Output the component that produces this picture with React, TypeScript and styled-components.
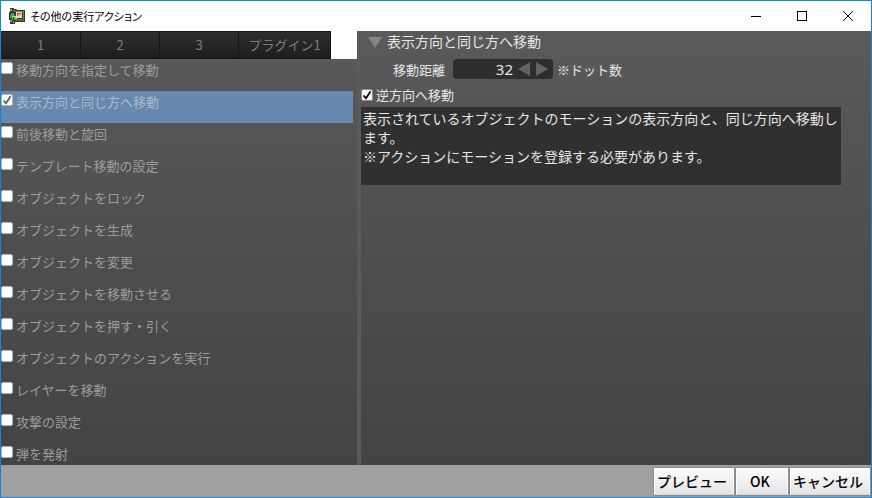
import React, { useState } from "react";
import styled, { createGlobalStyle } from "styled-components";

const GlobalStyle = createGlobalStyle`
  *, *::before, *::after { box-sizing: border-box; }
  body {
    margin: 0;
    font-family: "Noto Sans CJK JP", sans-serif;
    font-size: 13px;
  }
  button, input { font-family: inherit; }
`;

const Window = styled.div`
  display: flex;
  flex-direction: column;
  height: 100vh;
  border: 1px solid #1883d7;
  background: #a0a0a0;
`;

const TitleBar = styled.header`
  display: flex;
  align-items: center;
  flex: 0 0 30px;
  padding-left: 8px;
  background: #fff;
`;

const Title = styled.h1`
  flex: 1;
  margin: 0 0 0 5px;
  font-size: 11px;
  font-weight: 400;
  font-feature-settings: "palt";
  color: #000;
`;

const CaptionButton = styled.button`
  display: grid;
  place-items: center;
  width: 46px;
  height: 29px;
  padding: 0;
  border: 0;
  background: none;
`;

const Body = styled.main`
  display: flex;
  flex: 1;
  min-height: 0;
  background: linear-gradient(#5a5a5a, #434343);
`;

const Sidebar = styled.section`
  display: flex;
  flex-direction: column;
  flex: 0 0 356px;
  min-width: 0;
`;

const TabBar = styled.div`
  display: flex;
  flex: 0 0 28px;
  background: #fff;
`;

const Tab = styled.button<{ $wide?: boolean }>`
  flex: 0 0 ${(p) => (p.$wide ? 92 : 79)}px;
  padding: 0 0 2px;
  border: 1px solid #111718;
  border-width: 1px 1px 1px 0;
  background: linear-gradient(#2d2d2d, #1e1e1e);
  color: #7d7d7d;
  font-size: 13px;
  &:first-child {
    flex-basis: 80px;
  }
`;

const ActionList = styled.ul`
  flex: 1;
  min-height: 0;
  margin: 0;
  padding: 0 4px 0 0;
  overflow-y: auto;
  scrollbar-width: none;
  list-style: none;
`;

const ActionRow = styled.li<{ $selected: boolean }>`
  height: 32px;
  background: ${(p) => (p.$selected ? "#6789ad" : "transparent")};
  color: ${(p) => (p.$selected ? "#a9b9ca" : "#9c9c9c")};
`;

const CheckLabel = styled.label`
  display: flex;
  align-items: flex-start;
  gap: 3px;
  padding-top: 3px;
  line-height: 16px;
`;

const OptionLabel = styled(CheckLabel)`
  align-items: center;
  padding-top: 0;
`;

const CheckBox = styled.input<{ $dim?: boolean }>`
  flex: none;
  appearance: none;
  width: 12px;
  height: 12px;
  margin: 0;
  border: 1px solid ${(p) => (p.$dim ? "#b4b4b4" : "#8a8a8a")};
  border-radius: 2px;
  background: #fff;
  &:checked {
    background: #fff
      url("data:image/svg+xml,%3Csvg xmlns='http://www.w3.org/2000/svg' viewBox='0 0 10 10'%3E%3Cpath d='M1.5 5.5 4 8.3 8.6 1.2' fill='none' stroke='${(p) =>
        p.$dim ? "%23606060" : "%23000"}' stroke-width='1.8'/%3E%3C/svg%3E")
      center / 10px 10px no-repeat;
  }
`;

const Splitter = styled.div`
  flex: 0 0 4px;
  background: #5a5a5a;
`;

const Detail = styled.section`
  flex: 1;
  min-width: 0;
  color: #e6e6e6;
`;

const DetailHeading = styled.h2`
  display: flex;
  align-items: center;
  gap: 5px;
  height: 20px;
  margin: 0;
  padding-left: 7px;
  font-size: 14px;
  font-weight: 400;
  line-height: 20px;
`;

const DisclosureIcon = styled.svg`
  margin-top: 2px;
`;

const FieldRow = styled.div`
  display: flex;
  align-items: center;
  gap: 4px;
  height: 36px;
  padding-left: 32px;
`;

const FieldLabel = styled.label`
  margin-right: 4px;
`;

const Spinner = styled.div`
  display: flex;
  align-items: center;
  width: 100px;
  height: 20px;
  padding-right: 2px;
  border-radius: 4px;
  background: #2e2e2e;
`;

const NumberInput = styled.input`
  flex: 1;
  min-width: 0;
  height: 20px;
  padding: 0 2px 0 0;
  border: 0;
  background: none;
  color: #e6e6e6;
  font-family: "Noto Sans", sans-serif;
  font-size: 15px;
  line-height: 20px;
  text-align: right;
  outline: none;
`;

const StepButton = styled.button`
  display: grid;
  place-items: center;
  width: 18px;
  height: 20px;
  padding: 0;
  border: 0;
  background: none;
`;

const OptionRow = styled.div`
  height: 20px;
`;

const Description = styled.p`
  min-height: 78px;
  margin: 0 30px 0 0;
  padding: 2px;
  background: #303030;
  font-size: 14px;
  line-height: 19px;
  white-space: pre-line;
`;

const Footer = styled.footer`
  display: flex;
  justify-content: flex-end;
  gap: 2px;
  flex: 0 0 32px;
  padding: 3px 1px 2px 0;
  background: #a0a0a0;
`;

const DialogButton = styled.button<{ $narrow?: boolean }>`
  width: ${(p) => (p.$narrow ? 52 : 80)}px;
  padding: 0 4px 2px 0;
  border: 1px solid #fff;
  border-bottom-color: #d8d8d8;
  border-radius: 1px;
  background: linear-gradient(#fbfbfb, #e4e4e4);
  box-shadow: 0 0 0 1px #8c8c8c;
  color: #000;
  font-size: 14px;
  font-weight: 500;
  line-height: 20px;
`;

const AppIcon = () => (
  <svg width="16" height="16" viewBox="0 0 16 16" aria-hidden="true" shapeRendering="crispEdges">
    <path fill="#2b3a33" d="M1 0h4v1h2v1h9v12H6v2H1v-4H0V4h1z" />
    <path fill="#8e9a98" d="M1 1h2v2H1zM4 2h2v1H4zM7 1h1v1H7zM1 12h2v2H1zM4 13h1v2H4zM3 10h1v2H3z" />
    <path fill="#5e9a4a" d="M6 3h9v1H6zM2 5h3v2H2zM14 4h1v8h-1z" />
    <path fill="#3fae2e" d="M1 7h5v3H1zM5 10h3v2H5z" />
    <path fill="#a5e35c" d="M3 8h4v1H3zM6 9h2v2H6z" />
    <path fill="#e8ddc4" d="M7 4h6v6H7z" />
    <path fill="#b4533a" d="M8 5h4v3H8z" />
    <path fill="#f0b694" d="M9 6h3v2H9z" />
    <path fill="#2f7f38" d="M6 11h9v2H6z" />
    <path fill="#b8452e" d="M8 11h5v1H8z" />
  </svg>
);

const tabs = ["1", "2", "3", "プラグイン1"];

const actions = [
  "移動方向を指定して移動",
  "表示方向と同じ方へ移動",
  "前後移動と旋回",
  "テンプレート移動の設定",
  "オブジェクトをロック",
  "オブジェクトを生成",
  "オブジェクトを変更",
  "オブジェクトを移動させる",
  "オブジェクトを押す・引く",
  "オブジェクトのアクションを実行",
  "レイヤーを移動",
  "攻撃の設定",
  "弾を発射",
];

export default function App() {
  const [selected, setSelected] = useState(1);
  const [distance, setDistance] = useState(32);
  const [reverse, setReverse] = useState(true);

  return (
    <>
      <GlobalStyle />
      <Window>
        <TitleBar>
          <AppIcon />
          <Title>その他の実行アクション</Title>
          <CaptionButton aria-label="最小化">
            <svg width="10" height="10" shapeRendering="crispEdges">
              <path d="M0 5.5h10" stroke="#000" />
            </svg>
          </CaptionButton>
          <CaptionButton aria-label="最大化">
            <svg width="10" height="10" shapeRendering="crispEdges">
              <path d="M.5.5h9v9h-9z" fill="none" stroke="#000" />
            </svg>
          </CaptionButton>
          <CaptionButton aria-label="閉じる">
            <svg width="10" height="10">
              <path d="M0 0l10 10M10 0L0 10" stroke="#000" />
            </svg>
          </CaptionButton>
        </TitleBar>
        <Body>
          <Sidebar>
            <TabBar role="tablist">
              {tabs.map((t) => (
                <Tab key={t} role="tab" $wide={t.length > 1}>
                  {t}
                </Tab>
              ))}
            </TabBar>
            <ActionList>
              {actions.map((label, i) => (
                <ActionRow key={label} $selected={i === selected}>
                  <CheckLabel>
                    <CheckBox
                      type="checkbox"
                      $dim
                      checked={i === selected}
                      onChange={() => setSelected(i)}
                    />
                    {label}
                  </CheckLabel>
                </ActionRow>
              ))}
            </ActionList>
          </Sidebar>
          <Splitter />
          <Detail>
            <DetailHeading>
              <DisclosureIcon width="14" height="12" aria-hidden="true">
                <path d="M0 1h14L7 12z" fill="#858585" />
              </DisclosureIcon>
              表示方向と同じ方へ移動
            </DetailHeading>
            <FieldRow>
              <FieldLabel htmlFor="distance">移動距離</FieldLabel>
              <Spinner>
                <NumberInput
                  id="distance"
                  inputMode="numeric"
                  value={distance}
                  onChange={(e) => setDistance(Number(e.target.value) || 0)}
                />
                <StepButton aria-label="減らす" onClick={() => setDistance(distance - 1)}>
                  <svg width="12" height="14">
                    <path d="M12 0v14L0 7z" fill="#636363" />
                  </svg>
                </StepButton>
                <StepButton aria-label="増やす" onClick={() => setDistance(distance + 1)}>
                  <svg width="12" height="14">
                    <path d="M0 0v14l12-7z" fill="#636363" />
                  </svg>
                </StepButton>
              </Spinner>
              <span>※ドット数</span>
            </FieldRow>
            <OptionRow>
              <OptionLabel>
                <CheckBox
                  type="checkbox"
                  checked={reverse}
                  onChange={(e) => setReverse(e.target.checked)}
                />
                逆方向へ移動
              </OptionLabel>
            </OptionRow>
            <Description>
              {"表示されているオブジェクトのモーションの表示方向と、同じ方向へ移動します。\n※アクションにモーションを登録する必要があります。"}
            </Description>
          </Detail>
        </Body>
        <Footer>
          <DialogButton>プレビュー</DialogButton>
          <DialogButton $narrow>OK</DialogButton>
          <DialogButton>キャンセル</DialogButton>
        </Footer>
      </Window>
    </>
  );
}
